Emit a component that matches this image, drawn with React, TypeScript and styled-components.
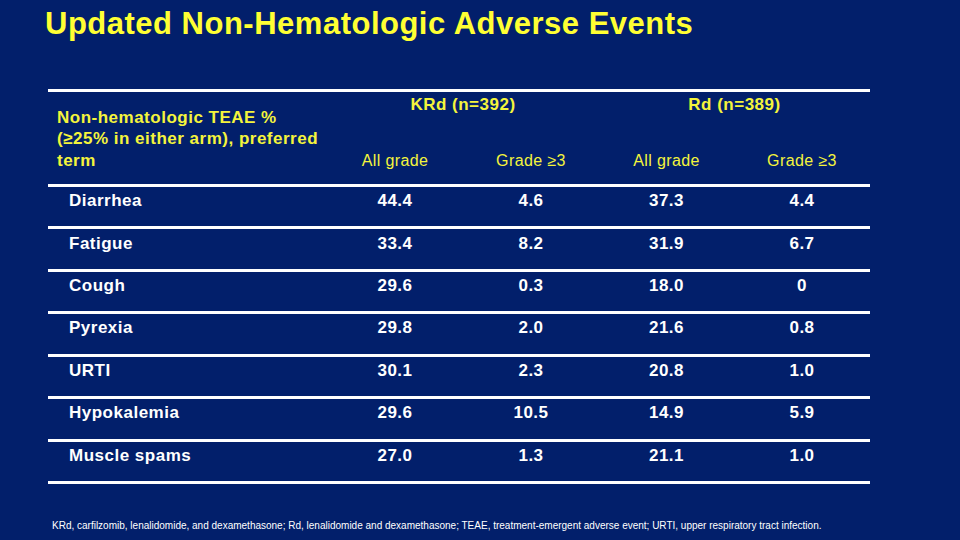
import styled, { createGlobalStyle } from 'styled-components';

const GlobalStyle = createGlobalStyle`
  html, body {
    margin: 0;
    padding: 0;
    background: #021f6b;
  }
  body {
    font-family: 'Liberation Sans', Arial, sans-serif;
  }
`;

const rows = [
  { term: 'Diarrhea', values: ['44.4', '4.6', '37.3', '4.4'] },
  { term: 'Fatigue', values: ['33.4', '8.2', '31.9', '6.7'] },
  { term: 'Cough', values: ['29.6', '0.3', '18.0', '0'] },
  { term: 'Pyrexia', values: ['29.8', '2.0', '21.6', '0.8'] },
  { term: 'URTI', values: ['30.1', '2.3', '20.8', '1.0'] },
  { term: 'Hypokalemia', values: ['29.6', '10.5', '14.9', '5.9'] },
  { term: 'Muscle spams', values: ['27.0', '1.3', '21.1', '1.0'] },
];

const columns = '279px 136px 136px 135px 136px';

function App() {
  return (
    <Slide>
      <GlobalStyle />
      <Title>Updated Non-Hematologic Adverse Events</Title>
      <Table>
        <HeaderRow>
          <TermHeader>
            Non-hematologic TEAE %
            <br />
            (≥25% in either arm), preferred
            <br />
            term
          </TermHeader>
          <GroupHeader $col={2}>KRd (n=392)</GroupHeader>
          <GroupHeader $col={4}>Rd (n=389)</GroupHeader>
          <SubHeader $col={2}>All grade</SubHeader>
          <SubHeader $col={3}>Grade ≥3</SubHeader>
          <SubHeader $col={4}>All grade</SubHeader>
          <SubHeader $col={5}>Grade ≥3</SubHeader>
        </HeaderRow>
        {rows.map((row) => (
          <Row key={row.term}>
            <Term>{row.term}</Term>
            {row.values.map((v, i) => (
              <Value key={i}>{v}</Value>
            ))}
          </Row>
        ))}
      </Table>
      <Footnote>
        KRd, carfilzomib, lenalidomide, and dexamethasone; Rd, lenalidomide and dexamethasone; TEAE,
        treatment-emergent adverse event; URTI, upper respiratory tract infection.
      </Footnote>
    </Slide>
  );
}

export default App;

const Slide = styled.div`
  width: 960px;
  height: 540px;
  background: #021f6b;
  overflow: hidden;
  display: flex;
  flex-direction: column;
`;

const Title = styled.h1`
  margin: 8px 0 0 45px;
  font-size: 31px;
  line-height: 1;
  letter-spacing: 0.5px;
  font-weight: bold;
  color: #ffff33;
`;

const Table = styled.div`
  margin: 50px 0 0 48px;
  width: 822px;
  border-top: 3px solid #ffffff;
`;

const HeaderRow = styled.div`
  display: grid;
  grid-template-columns: ${columns};
  grid-template-rows: 1fr auto;
  height: 95px;
  box-sizing: border-box;
  padding-bottom: 13px;
  border-bottom: 3px solid #ffffff;
  color: #f4f43c;
`;

const TermHeader = styled.div`
  grid-column: 1;
  grid-row: 1 / span 2;
  align-self: end;
  padding-left: 9px;
  font-size: 17px;
  line-height: 21.5px;
  letter-spacing: 0.5px;
  font-weight: bold;
`;

const GroupHeader = styled.div<{ $col: number }>`
  grid-column: ${(p) => p.$col} / span 2;
  grid-row: 1;
  align-self: start;
  margin-top: 2px;
  text-align: center;
  font-size: 17px;
  line-height: 21.5px;
  letter-spacing: 0.5px;
  font-weight: bold;
`;

const SubHeader = styled.div<{ $col: number }>`
  grid-column: ${(p) => p.$col};
  grid-row: 2;
  align-self: end;
  text-align: center;
  font-size: 16px;
  line-height: 21.5px;
  letter-spacing: 0.4px;
`;

const Row = styled.div`
  display: grid;
  grid-template-columns: ${columns};
  align-items: center;
  height: 42.43px;
  box-sizing: border-box;
  padding-bottom: 12px;
  border-bottom: 3px solid #ffffff;
  color: #ffffff;
  font-size: 17px;
  line-height: 17px;
  letter-spacing: 0.5px;
  font-weight: bold;
`;

const Term = styled.div`
  padding-left: 21px;
`;

const Value = styled.div`
  text-align: center;
`;

const Footnote = styled.p`
  margin: 36px 0 0 52px;
  font-size: 10px;
  line-height: 12px;
  color: #ffffff;
  white-space: nowrap;
`;
